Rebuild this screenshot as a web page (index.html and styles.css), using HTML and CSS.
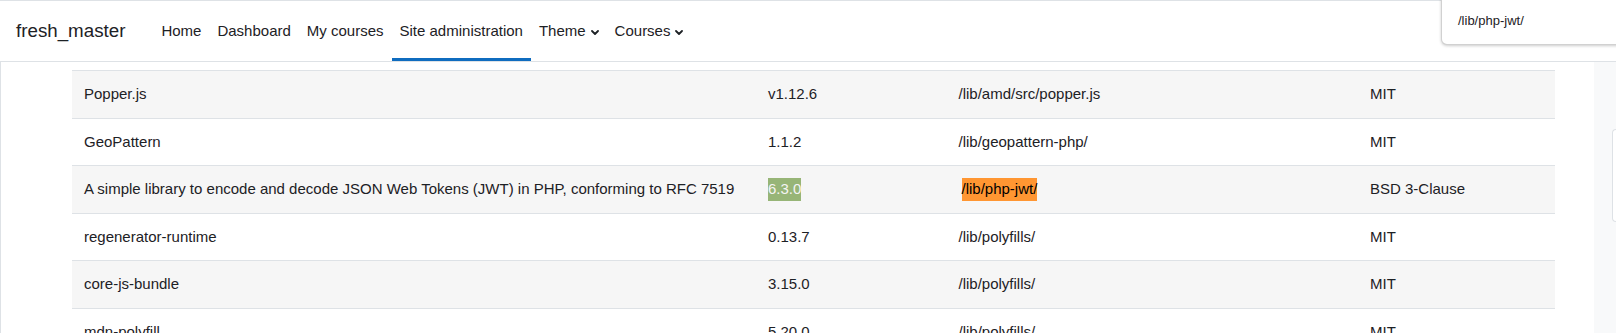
FILE: index.html
```html
<!DOCTYPE html>
<html lang="en">
<head>
<meta charset="utf-8">
<title>Third party libraries</title>
<link rel="stylesheet" href="styles.css">
</head>
<body>
<header class="navbar">
  <a class="brand">fresh_master</a>
  <nav class="primary">
    <a class="nav-link">Home</a>
    <a class="nav-link">Dashboard</a>
    <a class="nav-link">My courses</a>
    <a class="nav-link active">Site administration</a>
    <a class="nav-link">Theme<svg class="caret" viewBox="0 0 8 5" width="8" height="5"><path d="M1 1l3 3 3-3" fill="none" stroke="#1d2125" stroke-width="1.8" stroke-linecap="round" stroke-linejoin="round"/></svg></a>
    <a class="nav-link">Courses<svg class="caret" viewBox="0 0 8 5" width="8" height="5"><path d="M1 1l3 3 3-3" fill="none" stroke="#1d2125" stroke-width="1.8" stroke-linecap="round" stroke-linejoin="round"/></svg></a>
  </nav>
</header>
<div class="popover">/lib/php-jwt/</div>
<div class="page">
  <main class="main">
    <table class="libs">
      <colgroup>
        <col class="c-name"><col class="c-ver"><col class="c-loc"><col class="c-lic">
      </colgroup>
      <tbody>
        <tr><td>Popper.js</td><td>v1.12.6</td><td>/lib/amd/src/popper.js</td><td>MIT</td></tr>
        <tr><td>GeoPattern</td><td>1.1.2</td><td>/lib/geopattern-php/</td><td>MIT</td></tr>
        <tr><td>A simple library to encode and decode JSON Web Tokens (JWT) in PHP, conforming to RFC 7519</td><td><span class="hl-green">6.3.0</span></td><td><span class="hl-orange">/lib/php-jwt/</span></td><td>BSD 3-Clause</td></tr>
        <tr><td>regenerator-runtime</td><td>0.13.7</td><td>/lib/polyfills/</td><td>MIT</td></tr>
        <tr><td>core-js-bundle</td><td>3.15.0</td><td>/lib/polyfills/</td><td>MIT</td></tr>
        <tr><td>mdn-polyfill</td><td>5.20.0</td><td>/lib/polyfills/</td><td>MIT</td></tr>
      </tbody>
    </table>
  </main>
  <aside class="drawer"><div class="drawer-box"></div></aside>
</div>
</body>
</html>
```
FILE: styles.css
```css
html, body {
  margin: 0;
  padding: 0;
  overflow: hidden;
  background: #fff;
}
body {
  font-family: "Liberation Sans", Arial, sans-serif;
  font-size: 15px;
  line-height: 1.5;
  color: #1d2125;
  position: relative;
  height: 333px;
}
.navbar {
  display: flex;
  align-items: stretch;
  height: 60px;
  border-top: 1px solid #dee2e6;
  border-bottom: 1px solid #dee2e6;
  background: #fff;
}
.brand {
  display: flex;
  align-items: center;
  padding-left: 16px;
  margin-right: 28px;
  font-size: 18.75px;
  color: #1d2125;
}
.primary {
  display: flex;
  align-items: stretch;
}
.nav-link {
  display: flex;
  align-items: center;
  padding: 0 8px;
  border-top: 3px solid transparent;
  border-bottom: 3px solid transparent;
  color: #1d2125;
  white-space: nowrap;
}
.nav-link.active {
  border-bottom-color: #0f6cbf;
}
.caret {
  margin-left: 5px;
  margin-top: 3px;
}
.popover {
  position: absolute;
  left: 1441px;
  top: -20px;
  width: 240px;
  height: 65px;
  box-sizing: border-box;
  padding: 30px 16px 0;
  font-size: 13px;
  line-height: 19.5px;
  color: #1d2125;
  background: #fff;
  border: 1px solid rgba(0, 0, 0, 0.18);
  border-radius: 6px;
  box-shadow: 0 1px 3px rgba(0, 0, 0, 0.2);
}
.page {
  display: flex;
  border-left: 1px solid #dee2e6;
  height: 271px;
}
.main {
  flex: 1;
  padding: 8px 39px 0 71px;
}
.libs {
  width: 1483px;
  table-layout: fixed;
  border-collapse: collapse;
}
.c-name { width: 684px; }
.c-ver { width: 190.5px; }
.c-loc { width: 411.5px; }
.c-lic { width: 197px; }
.libs td {
  padding: 12px;
  border-top: 1px solid #dee2e6;
  vertical-align: top;
  white-space: nowrap;
  line-height: 22.5px;
}
.libs tr:nth-child(odd) td {
  background: #f6f6f6;
}
.hl-green {
  display: inline-block;
  vertical-align: top;
  background: #97b577;
  color: #f4f4f4;
}
.hl-orange {
  display: inline-block;
  vertical-align: top;
  margin-left: 3px;
  background: #ff9632;
  color: #000;
}
.drawer {
  width: 22px;
  background: #f8f9fa;
}
.drawer-box {
  margin: 67px 0 0 18px;
  height: 91px;
  background: #fff;
  border: 1px solid #dee2e6;
  border-right: none;
  border-radius: 6px 0 0 6px;
}
```
